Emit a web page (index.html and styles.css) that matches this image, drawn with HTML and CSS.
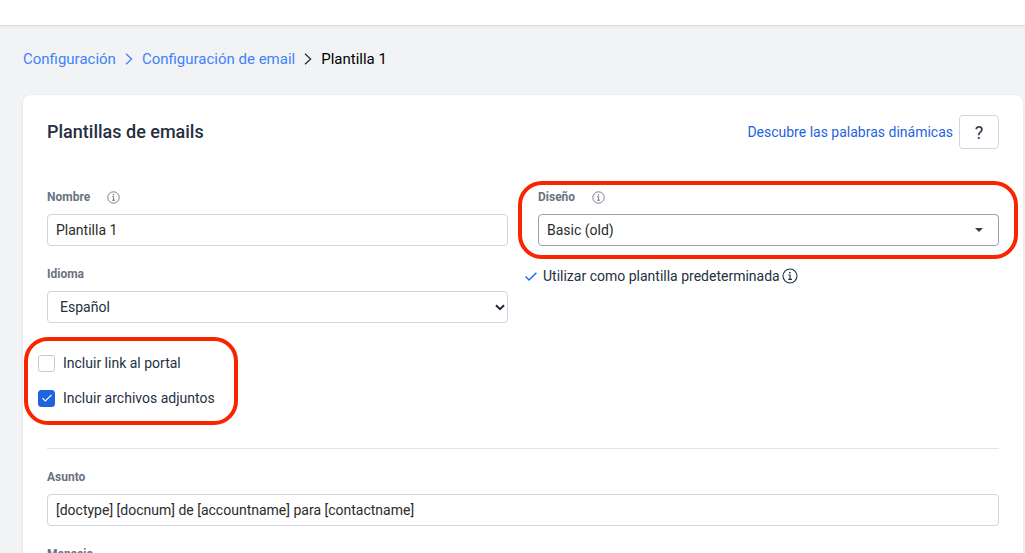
FILE: index.html
```
<!DOCTYPE html>
<html lang="es">
<head>
<meta charset="utf-8">
<meta name="viewport" content="width=device-width, initial-scale=1">
<title>Plantillas de emails</title>
<link rel="stylesheet" href="styles.css">
</head>
<body>
<svg width="0" height="0" class="sprite" aria-hidden="true">
  <symbol id="info" viewBox="0 0 16 16">
    <circle cx="8" cy="8" r="7" fill="none" stroke="currentColor" stroke-width="1.1"/>
    <path d="M6.3 7h1.8v4.3M6.2 11.4h3.8" fill="none" stroke="currentColor" stroke-width="1.1"/>
    <circle cx="7.9" cy="4.6" r=".9" fill="currentColor"/>
  </symbol>
  <symbol id="chevron" viewBox="0 0 8 12">
    <path d="M1 .8 6.6 6 1 11.2" fill="none" stroke="currentColor" stroke-width="1.3"/>
  </symbol>
  <symbol id="check" viewBox="0 0 12 9">
    <path d="M.6 4.6 4 8 11.4.8" fill="none" stroke="currentColor" stroke-width="1.4"/>
  </symbol>
</svg>
<header class="topbar"></header>
<nav class="breadcrumb" aria-label="Ruta">
  <a href="#">Configuración</a>
  <svg class="chevron chevron-link"><use href="#chevron"/></svg>
  <a href="#">Configuración de email</a>
  <svg class="chevron"><use href="#chevron"/></svg>
  <span>Plantilla 1</span>
</nav>
<main class="card">
  <div class="card-header">
    <h1>Plantillas de emails</h1>
    <a class="help-link" href="#">Descubre las palabras dinámicas</a>
    <button class="help" type="button">?</button>
  </div>
  <form>
    <div class="columns">
      <div class="column">
        <div class="field">
          <div class="label-row"><label for="name">Nombre</label><svg class="info"><use href="#info"/></svg></div>
          <input class="control" id="name" type="text" value="Plantilla 1">
        </div>
        <div class="field">
          <div class="label-row"><label for="lang">Idioma</label></div>
          <div class="select-wrap">
            <select class="control language" id="lang"><option>Español</option></select>
            <svg class="arrow" viewBox="0 0 10 7"><path d="M1 1.2 5 5.2 9 1.2" fill="none" stroke="currentColor" stroke-width="2"/></svg>
          </div>
        </div>
      </div>
      <div class="column">
        <div class="field highlight highlight-design">
          <div class="label-row"><label for="design">Diseño</label><svg class="info"><use href="#info"/></svg></div>
          <div class="select-wrap">
            <select class="control design" id="design"><option>Basic (old)</option></select>
            <svg class="caret" viewBox="0 0 8 4"><path d="M0 0h8L4 4z" fill="currentColor"/></svg>
          </div>
        </div>
        <div class="default-note">
          <svg class="tick"><use href="#check"/></svg>
          <span>Utilizar como plantilla predeterminada</span>
          <svg class="note-info"><use href="#info"/></svg>
        </div>
      </div>
    </div>
    <div class="checks highlight highlight-checks">
      <label class="check"><span class="box"><input type="checkbox"><svg><use href="#check"/></svg></span>Incluir link al portal</label>
      <label class="check"><span class="box"><input type="checkbox" checked><svg><use href="#check"/></svg></span>Incluir archivos adjuntos</label>
    </div>
    <hr>
    <div class="column">
      <div class="field">
        <div class="label-row"><label for="subject">Asunto</label></div>
        <input class="control" id="subject" type="text" value="[doctype] [docnum] de [accountname] para [contactname]">
      </div>
      <div class="field">
        <div class="label-row"><label for="message">Mensaje</label></div>
        <textarea class="control message" id="message"></textarea>
      </div>
    </div>
  </form>
</main>
</body>
</html>
```
FILE: styles.css
```
* { box-sizing: border-box; }
html { overflow: hidden; }
body {
  margin: 0;
  background: #f2f3f5;
  color: #252f3f;
  font: 14px/20px Roboto, "Liberation Sans", sans-serif;
}
a { color: #1c64f2; text-decoration: none; }
.sprite { position: absolute; }
.topbar {
  height: 26px;
  background: #fff;
  border-bottom: 1px solid #dcdee3;
  box-shadow: 0 1px 2px rgba(0, 0, 0, .05);
}
.breadcrumb {
  display: flex;
  align-items: center;
  gap: 9px;
  padding: 23px 23px 26px;
  font-size: 15px;
  color: #000;
}
.breadcrumb a { color: #3f83f8; }
.chevron { width: 8px; height: 12px; color: #252f3f; }
.chevron-link { color: #3f83f8; }
.card {
  margin: 0 2px 0 23px;
  padding: 20px 24px 24px;
  background: #fff;
  border-radius: 8px;
  box-shadow: 0 1px 3px rgba(0, 0, 0, .1);
}
.card-header { display: flex; align-items: center; gap: 6px; }
h1 { flex: 1; margin: 0; font-size: 18px; font-weight: 500; }
.help-link { color: #1f64dd; }
.help {
  width: 40px;
  height: 34px;
  padding: 0;
  background: #fff;
  border: 1px solid #d2d6dc;
  border-radius: 4px;
  color: #252f3f;
  font: 18px Roboto, sans-serif;
}
form { padding-top: 40px; }
.columns { display: grid; grid-template-columns: 1fr 1fr; gap: 30px; }
.column { display: flex; flex-direction: column; gap: 20px; }
.field { display: flex; flex-direction: column; gap: 9px; }
.label-row {
  display: flex;
  align-items: center;
  gap: 17px;
  color: #6b7280;
  font-size: 12px;
  font-weight: 700;
  line-height: 16px;
}
.info { width: 13px; height: 13px; }
.control {
  display: block;
  width: 100%;
  height: 32px;
  padding: 0 8px;
  appearance: none;
  background: #fff;
  border: 1px solid #d2d3dc;
  border-radius: 4px;
  color: #2b2b2b;
  font: 14px Roboto, "Liberation Sans", sans-serif;
}
.language { padding-left: 12px; color: #252f3f; }
.design { border-color: #98a1ab; }
.message { height: 120px; }
.select-wrap { position: relative; }
.arrow, .caret { position: absolute; pointer-events: none; }
.arrow { right: 3px; top: 13px; width: 10px; height: 7px; color: #1f2937; }
.caret { right: 16px; top: 14px; width: 8px; height: 4px; color: #3c3c3c; }
.default-note {
  display: flex;
  align-items: center;
  margin-left: -13px;
  font-size: 14px;
}
.tick { width: 12px; height: 9px; margin-right: 6px; color: #1c64f2; }
.note-info { width: 16px; height: 16px; margin-left: 2px; }
.highlight { position: relative; }
.highlight::after {
  content: "";
  position: absolute;
  border: 4px solid #f92500;
  border-radius: 24px;
  pointer-events: none;
}
.highlight-design::after { inset: -8px -19px -13px -20px; }
.checks {
  display: flex;
  flex-direction: column;
  gap: 15px;
  width: max-content;
  margin: 30px 0 40px -9px;
}
.highlight-checks::after { inset: -16px -23px -17px -14px; }
.check { display: flex; align-items: center; gap: 8px; font-size: 14px; }
.box { display: grid; width: 17px; height: 17px; place-items: center; }
.box > * { grid-area: 1 / 1; }
.box input {
  width: 17px;
  height: 17px;
  margin: 0;
  appearance: none;
  background: #fff;
  border: 1px solid #c9c9cc;
  border-radius: 3px;
}
.box input:checked { background: #1f64dd; border-color: #1f64dd; }
.box svg { width: 10px; height: 8px; color: #fff; pointer-events: none; z-index: 1; }
hr { margin: 0 0 20px; border: 0; border-top: 1px solid #e5e5e7; }
```
